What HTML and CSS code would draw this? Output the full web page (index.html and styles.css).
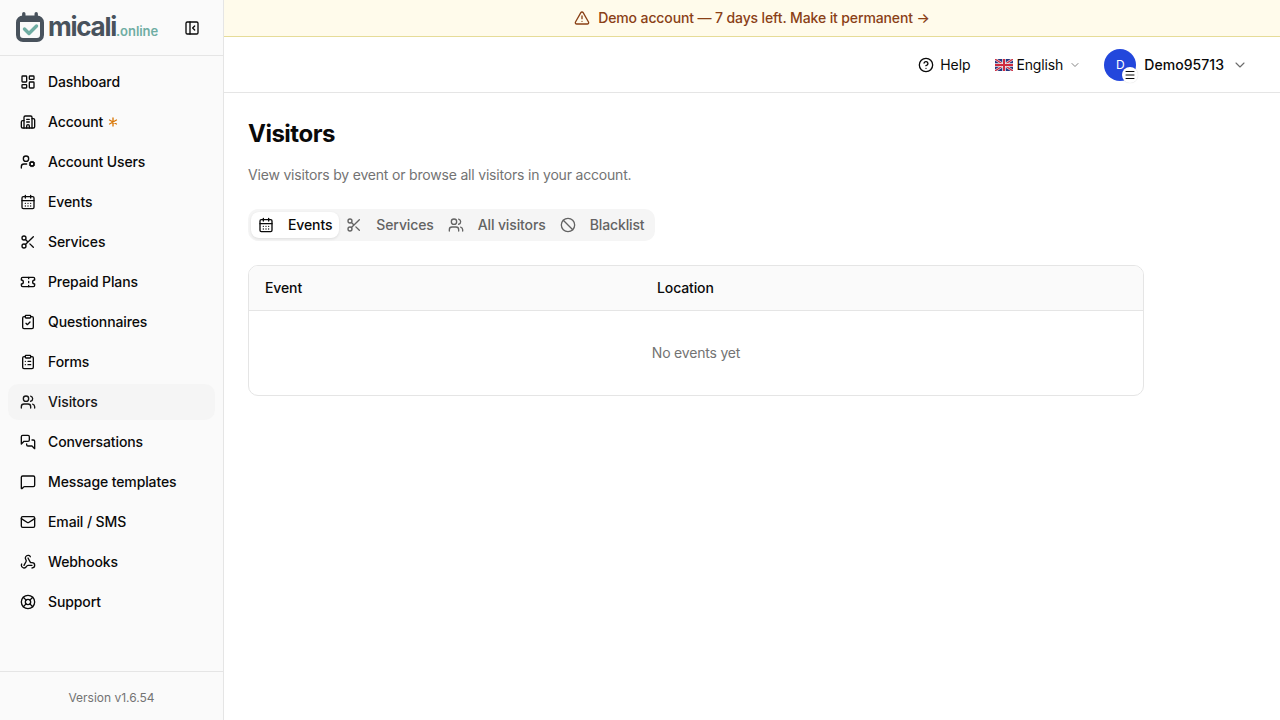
FILE: index.html
```html
<!DOCTYPE html>
<html lang="en">
<head>
    <meta charset="UTF-8">
    <meta name="viewport" content="width=device-width, initial-scale=1.0">
    <title>Visitors - micali.online</title>
    <link rel="stylesheet" href="styles.css">
</head>
<body>

<!-- Icons used more than once -->
<svg class="sprite" xmlns="http://www.w3.org/2000/svg">
    <symbol id="calendar" viewBox="0 0 24 24"><path d="M8 2v4M16 2v4M3 10h18M8 14h.01M12 14h.01M16 14h.01M8 18h.01M12 18h.01M16 18h.01"/><rect x="3" y="4" width="18" height="18" rx="2"/></symbol>
    <symbol id="scissors" viewBox="0 0 24 24"><circle cx="6" cy="6" r="3"/><path d="M8.12 8.12 12 12M20 4 8.12 15.88"/><circle cx="6" cy="18" r="3"/><path d="M14.8 14.8 20 20"/></symbol>
    <symbol id="users" viewBox="0 0 24 24"><path d="M16 21v-2a4 4 0 0 0-4-4H6a4 4 0 0 0-4 4v2M16 3.13a4 4 0 0 1 0 7.75M22 21v-2a4 4 0 0 0-3-3.87"/><circle cx="9" cy="7" r="4"/></symbol>
    <symbol id="chevron" viewBox="0 0 24 24"><path d="m6 9 6 6 6-6"/></symbol>
</svg>

<div class="app">
    <aside class="sidebar">
        <div class="sidebar-header">
            <a class="logo" href="#">
                <svg class="logo-mark" viewBox="0 0 28 31">
                    <rect x="2" y="5.500" width="24" height="22.500" rx="5" fill="none" stroke="#48525c" stroke-width="4"/>
                    <path d="M2 9V9a4 4 0 0 1 4-4h16a4 4 0 0 1 4 4v1H2z" fill="#48525c"/>
                    <path d="M7.800 1.700v4M20.200 1.700v4" stroke="#48525c" stroke-width="3.400" stroke-linecap="round"/>
                    <path d="m8.500 17 4.500 4.500 7.500-7.500" fill="none" stroke="#6fada3" stroke-width="3.400" stroke-linecap="round" stroke-linejoin="round"/>
                </svg>
                <span class="logo-name">micali</span><span class="logo-tld">.online</span>
            </a>
            <button class="collapse" aria-label="Collapse sidebar">
                <svg class="icon" viewBox="0 0 24 24"><rect x="3" y="3" width="18" height="18" rx="2"/><path d="M9 3v18M16 15l-3-3 3-3"/></svg>
            </button>
        </div>

        <nav class="menu">
            <a href="#"><svg class="icon" viewBox="0 0 24 24"><rect width="7" height="9" x="3" y="3" rx="1"/><rect width="7" height="5" x="14" y="3" rx="1"/><rect width="7" height="9" x="14" y="12" rx="1"/><rect width="7" height="5" x="3" y="16" rx="1"/></svg>Dashboard</a>
            <a href="#"><svg class="icon" viewBox="0 0 24 24"><path d="M10 12h4M10 8h4M14 21v-3a2 2 0 0 0-4 0v3"/><path d="M6 10H4a2 2 0 0 0-2 2v7a2 2 0 0 0 2 2h16a2 2 0 0 0 2-2V9a2 2 0 0 0-2-2h-2"/><path d="M6 21V5a2 2 0 0 1 2-2h8a2 2 0 0 1 2 2v16"/></svg>Account<svg class="required" viewBox="0 0 24 24"><path d="M12 6v12M17.196 9 6.804 15M6.804 9l10.392 6"/></svg></a>
            <a href="#"><svg class="icon" viewBox="0 0 24 24"><path d="M10 15H6a4 4 0 0 0-4 4v2"/><circle cx="9" cy="7" r="4"/><circle cx="18" cy="15" r="3"/><path d="m14.305 16.530.923-.382M15.228 13.852l-.923-.383M16.852 12.228l-.383-.923M16.852 17.772l-.383.924M19.148 12.228l.383-.923M19.530 18.696l-.382-.924M20.772 13.852l.924-.383M20.772 16.148l.924.383"/></svg>Account Users</a>
            <a href="#"><svg class="icon"><use href="#calendar"/></svg>Events</a>
            <a href="#"><svg class="icon"><use href="#scissors"/></svg>Services</a>
            <a href="#"><svg class="icon" viewBox="0 0 24 24"><path d="M2 9a3 3 0 0 1 0 6v2a2 2 0 0 0 2 2h16a2 2 0 0 0 2-2v-2a3 3 0 0 1 0-6V7a2 2 0 0 0-2-2H4a2 2 0 0 0-2 2Z"/><path d="M13 5v2M13 17v2M13 11v2"/></svg>Prepaid Plans</a>
            <a href="#"><svg class="icon" viewBox="0 0 24 24"><rect width="8" height="4" x="8" y="2" rx="1"/><path d="M16 4h2a2 2 0 0 1 2 2v14a2 2 0 0 1-2 2H6a2 2 0 0 1-2-2V6a2 2 0 0 1 2-2h2"/><path d="m9 14 2 2 4-4"/></svg>Questionnaires</a>
            <a href="#"><svg class="icon" viewBox="0 0 24 24"><rect width="8" height="4" x="8" y="2" rx="1"/><path d="M16 4h2a2 2 0 0 1 2 2v14a2 2 0 0 1-2 2H6a2 2 0 0 1-2-2V6a2 2 0 0 1 2-2h2M12 11h4M12 16h4M8 11h.01M8 16h.01"/></svg>Forms</a>
            <a class="active" href="#"><svg class="icon"><use href="#users"/></svg>Visitors</a>
            <a href="#"><svg class="icon" viewBox="0 0 24 24"><path d="M14 9a2 2 0 0 1-2 2H6l-4 4V4a2 2 0 0 1 2-2h8a2 2 0 0 1 2 2z"/><path d="M18 9h2a2 2 0 0 1 2 2v11l-4-4h-6a2 2 0 0 1-2-2v-1"/></svg>Conversations</a>
            <a href="#"><svg class="icon" viewBox="0 0 24 24"><path d="M22 17a2 2 0 0 1-2 2H6.828a2 2 0 0 0-1.414.586l-2.202 2.202A.71.71 0 0 1 2 21.286V5a2 2 0 0 1 2-2h16a2 2 0 0 1 2 2z"/></svg>Message templates</a>
            <a href="#"><svg class="icon" viewBox="0 0 24 24"><path d="m22 7-8.991 5.727a2 2 0 0 1-2.009 0L2 7"/><rect x="2" y="4" width="20" height="16" rx="2"/></svg>Email / SMS</a>
            <a href="#"><svg class="icon" viewBox="0 0 24 24"><path d="M18 16.980h-5.990c-1.100 0-1.950.940-2.480 1.900A4 4 0 0 1 2 17c.010-.700.200-1.400.570-2"/><path d="m6 17 3.130-5.780c.530-.970.100-2.180-.500-3.100a4 4 0 1 1 6.890-4.060"/><path d="m12 6 3.130 5.730C15.660 12.700 16.900 13 18 13a4 4 0 0 1 0 8"/></svg>Webhooks</a>
            <a href="#"><svg class="icon" viewBox="0 0 24 24"><circle cx="12" cy="12" r="10"/><path d="m4.930 4.930 4.240 4.240M14.830 9.170l4.240-4.240M14.830 14.830l4.240 4.240M9.170 14.830l-4.240 4.240"/><circle cx="12" cy="12" r="4"/></svg>Support</a>
        </nav>

        <div class="version">Version v1.6.54</div>
    </aside>

    <div class="page">
        <a class="banner" href="#">
            <svg class="icon" viewBox="0 0 24 24"><path d="m21.730 18-8-14a2 2 0 0 0-3.480 0l-8 14A2 2 0 0 0 4 21h16a2 2 0 0 0 1.730-3M12 9v4M12 17h.01"/></svg>
            <span>Demo account — 7 days left. Make it permanent →</span>
        </a>

        <header class="topbar">
            <a class="help" href="#">
                <svg class="icon" viewBox="0 0 24 24"><circle cx="12" cy="12" r="10"/><path d="M9.090 9a3 3 0 0 1 5.830 1c0 2-3 3-3 3M12 17h.01"/></svg>
                Help
            </a>
            <button class="language">
                <svg class="flag" viewBox="0 0 36 24">
                    <path d="M0 0h36v24H0z" fill="#27357e"/>
                    <path d="m0 0 36 24M36 0 0 24" stroke="#e6e0e8" stroke-width="5"/>
                    <path d="m0 0 36 24M36 0 0 24" stroke="#cf2a3e" stroke-width="2.400"/>
                    <path d="M18 0v24M0 12h36" stroke="#f1eef0" stroke-width="7"/>
                    <path d="M18 0v24M0 12h36" stroke="#cf2a3e" stroke-width="4"/>
                </svg>
                English
                <svg class="icon chevron-small"><use href="#chevron"/></svg>
            </button>
            <button class="profile">
                <span class="avatar">D
                    <span class="avatar-badge"><svg class="icon" viewBox="0 0 24 24"><path d="M4 5h16M4 12h16M4 19h16"/></svg></span>
                </span>
                Demo95713
                <svg class="icon chevron"><use href="#chevron"/></svg>
            </button>
        </header>

        <main class="content">
            <h1>Visitors</h1>
            <p class="description">View visitors by event or browse all visitors in your account.</p>

            <div class="tabs">
                <button class="tab active"><svg class="icon"><use href="#calendar"/></svg>Events</button>
                <button class="tab"><svg class="icon"><use href="#scissors"/></svg>Services</button>
                <button class="tab"><svg class="icon"><use href="#users"/></svg>All visitors</button>
                <button class="tab"><svg class="icon" viewBox="0 0 24 24"><circle cx="12" cy="12" r="10"/><path d="m4.900 4.900 14.200 14.200"/></svg>Blacklist</button>
            </div>

            <div class="table">
                <div class="table-head">
                    <span class="col-event">Event</span>
                    <span>Location</span>
                </div>
                <div class="table-empty">No events yet</div>
            </div>
        </main>
    </div>
</div>

</body>
</html>
```
FILE: styles.css
```css
* {
    margin: 0;
    padding: 0;
    box-sizing: border-box;
}

body {
    font-family: 'Inter', sans-serif;
    font-size: 14px;
    line-height: 20px;
    letter-spacing: -0.12px;
    font-optical-sizing: none;
    color: #0a0a0a;
    background: #fff;
}

a {
    color: inherit;
    text-decoration: none;
}

button {
    font: inherit;
    letter-spacing: inherit;
    color: inherit;
    background: none;
    border: none;
    cursor: pointer;
}

.sprite {
    display: none;
}

.icon {
    width: 16px;
    height: 16px;
    flex-shrink: 0;
    fill: none;
    stroke: currentColor;
    stroke-width: 2;
    stroke-linecap: round;
    stroke-linejoin: round;
}

.app {
    display: flex;
    height: 100vh;
}

/* Sidebar */
.sidebar {
    width: 224px;
    flex-shrink: 0;
    display: flex;
    flex-direction: column;
    background: #fafafa;
    border-right: 1px solid #e5e5e5;
}

.sidebar-header {
    height: 56px;
    display: flex;
    align-items: center;
    justify-content: space-between;
    padding: 0 23px 0 16px;
    border-bottom: 1px solid #e5e5e5;
}

.logo {
    display: flex;
    align-items: baseline;
    padding-bottom: 1px;
    font-weight: 700;
}

.logo-mark {
    width: 28px;
    height: 31px;
    align-self: center;
    margin-right: 4px;
}

.logo-name {
    font-size: 26px;
    line-height: 32px;
    letter-spacing: -1.25px;
    color: #48525c;
}

.logo-tld {
    font-size: 13px;
    font-weight: 600;
    letter-spacing: -0.05px;
    color: #6fada3;
}

.collapse {
    display: flex;
}

.menu {
    flex: 1;
    display: flex;
    flex-direction: column;
    gap: 4px;
    padding: 8px;
}

.menu a {
    height: 36px;
    display: flex;
    align-items: center;
    gap: 12px;
    padding: 0 12px;
    border-radius: 10px;
    font-weight: 500;
}

.menu a.active {
    background: #f5f5f5;
    color: #171717;
}

.menu .required {
    width: 16px;
    height: 16px;
    margin-left: -10px;
    fill: none;
    stroke: #d97706;
    stroke-width: 2;
    stroke-linecap: round;
}

.version {
    height: 49px;
    padding-top: 16px;
    border-top: 1px solid #e5e5e5;
    font-size: 12px;
    letter-spacing: 0;
    text-align: center;
    color: #737373;
}

/* Main column */
.page {
    flex: 1;
    display: flex;
    flex-direction: column;
}

.banner {
    height: 37px;
    display: flex;
    align-items: center;
    justify-content: center;
    gap: 8px;
    background: #fffbeb;
    border-bottom: 1px solid #e6dc98;
    color: #8a4016;
    font-weight: 500;
}

.topbar {
    height: 56px;
    display: flex;
    align-items: center;
    justify-content: flex-end;
    padding-right: 32px;
    border-bottom: 1px solid #e5e5e5;
}

.help {
    display: flex;
    align-items: center;
    gap: 6px;
    margin-right: 25px;
}

.language {
    display: flex;
    align-items: center;
    margin-right: 23px;
}

.flag {
    width: 18px;
    height: 12px;
    margin-right: 3px;
}

.chevron-small {
    width: 12px;
    height: 12px;
    margin-left: 6px;
    opacity: 0.5;
}

.profile {
    display: flex;
    align-items: center;
    font-weight: 500;
    letter-spacing: 0.05px;
}

.avatar {
    position: relative;
    width: 32px;
    height: 32px;
    margin-right: 8px;
    border-radius: 50%;
    background: #2347dc;
    color: #fff;
    font-size: 12px;
    line-height: 32px;
    font-weight: 400;
    text-align: center;
}

.avatar-badge {
    position: absolute;
    right: -2px;
    bottom: -2px;
    width: 16px;
    height: 16px;
    display: flex;
    align-items: center;
    justify-content: center;
    border-radius: 50%;
    background: #fff;
    color: #0a0a0a;
    box-shadow: 0 0 1px rgba(0, 0, 0, 0.2);
}

.avatar-badge .icon {
    width: 12px;
    height: 12px;
}

.chevron {
    margin-left: 8px;
    stroke-width: 1.6;
    opacity: 0.6;
}

.content {
    padding: 24px;
}

.content h1 {
    padding-top: 1px;
    font-size: 24px;
    line-height: 31px;
    font-weight: 650;
    letter-spacing: -0.5px;
}

.description {
    margin-top: 16px;
    letter-spacing: -0.19px;
    color: #737373;
}

/* Tabs */
.tabs {
    display: inline-flex;
    height: 32px;
    margin-top: 24px;
    padding: 3px;
    border-radius: 10px;
    background: #f5f5f5;
}

.tab {
    display: flex;
    align-items: center;
    gap: 14px;
    padding: 0 7px;
    border-radius: 8px;
    font-weight: 500;
    color: #636363;
}

.tab.active {
    background: #fff;
    color: #0a0a0a;
    box-shadow: 0 1px 3px rgba(0, 0, 0, 0.1);
}

/* Events table */
.table {
    width: 896px;
    margin-top: 24px;
    border: 1px solid #e5e5e5;
    border-radius: 10px;
    overflow: hidden;
}

.table-head {
    height: 45px;
    display: flex;
    align-items: center;
    padding: 0 16px;
    background: #fafafa;
    border-bottom: 1px solid #e5e5e5;
    font-weight: 500;
}

.col-event {
    width: 392px;
}

.table-empty {
    padding: 32px 16px;
    text-align: center;
    letter-spacing: -0.19px;
    color: #737373;
}
```
